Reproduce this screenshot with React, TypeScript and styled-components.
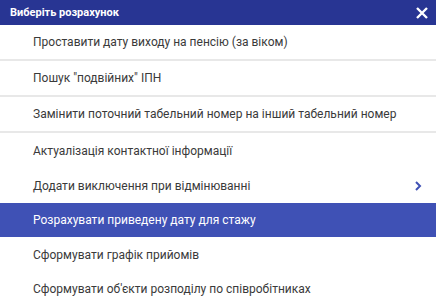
import React from "react";
import styled, { createGlobalStyle } from "styled-components";

const GlobalStyle = createGlobalStyle`
  html, body {
    margin: 0;
    padding: 0;
    background: #ffffff;
  }
  body {
    font-family: Roboto, "Liberation Sans", Arial, sans-serif;
  }
`;

const Dialog = styled.div`
  width: 436px;
  height: 302px;
  overflow: hidden;
  display: flex;
  flex-direction: column;
  background: #ffffff;
`;

const Header = styled.div`
  height: 25px;
  flex: 0 0 25px;
  display: flex;
  align-items: center;
  justify-content: space-between;
  padding: 0 7px 0 10px;
  background: #283593;
  color: #ffffff;
`;

const Title = styled.span`
  font-size: 11px;
  font-weight: 700;
`;

const CloseButton = styled.button`
  border: none;
  background: none;
  padding: 0;
  display: flex;
  align-items: center;
  color: #ffffff;
  cursor: pointer;
`;

const List = styled.ul`
  list-style: none;
  margin: 0;
  padding: 0;
`;

const Item = styled.li<{ $active?: boolean; $divided?: boolean; $tall?: boolean }>`
  height: ${({ $tall }) => ($tall ? "35px" : "34px")};
  display: flex;
  align-items: center;
  justify-content: space-between;
  padding: 0 14px 0 33px;
  font-size: 12px;
  white-space: nowrap;
  color: ${({ $active }) => ($active ? "#ffffff" : "#3a3a3a")};
  background: ${({ $active }) => ($active ? "#3f51b5" : "#ffffff")};
  border-bottom: ${({ $divided }) => ($divided ? "2px solid #e8e8e8" : "none")};
`;

const Chevron = styled.span`
  display: flex;
  color: #3f51b5;
`;

const items = [
  { label: "Проставити дату виходу на пенсію (за віком)", divided: true },
  { label: "Пошук \"подвійних\" ІПН", divided: true },
  { label: "Замінити поточний табельний номер на інший табельний номер", divided: true },
  { label: "Актуалізація контактної інформації", tall: true },
  { label: "Додати виключення при відмінюванні", submenu: true, tall: true },
  { label: "Розрахувати приведену дату для стажу", active: true },
  { label: "Сформувати графік прийомів", tall: true },
  { label: "Сформувати об'єкти розподілу по співробітниках" },
];

const App = () => {
  return (
    <>
      <GlobalStyle />
      <Dialog>
        <Header>
          <Title>Виберіть розрахунок</Title>
          <CloseButton>
            <svg width="14" height="14" viewBox="0 0 14 14">
              <path d="M2 2 L12 12 M12 2 L2 12" stroke="currentColor" strokeWidth="2.4" />
            </svg>
          </CloseButton>
        </Header>
        <List>
          {items.map((item) => (
            <Item
              key={item.label}
              $active={item.active}
              $divided={item.divided}
              $tall={item.tall}
            >
              {item.label}
              {item.submenu && (
                <Chevron>
                  <svg width="8" height="12" viewBox="0 0 8 12">
                    <path d="M2 2 L6 6 L2 10" fill="none" stroke="currentColor" strokeWidth="2" />
                  </svg>
                </Chevron>
              )}
            </Item>
          ))}
        </List>
      </Dialog>
    </>
  );
};

export default App;
